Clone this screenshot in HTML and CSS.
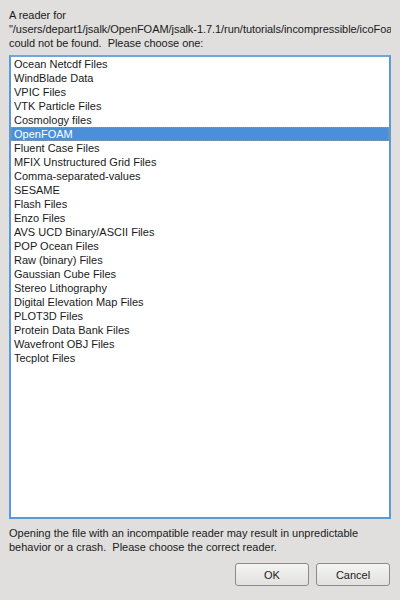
FILE: index.html
```html
<!DOCTYPE html>
<html>
<head>
<meta charset="utf-8">
<link rel="stylesheet" href="styles.css">
</head>
<body>
<div class="dialog">
  <div class="header">
    <div class="line">A reader for</div>
    <div class="line">"/users/depart1/jsalk/OpenFOAM/jsalk-1.7.1/run/tutorials/incompressible/icoFoam/cavity/cavity.foam"</div>
    <div class="line">could not be found.&nbsp; Please choose one:</div>
  </div>
  <div class="list">
    <div class="item">Ocean Netcdf Files</div>
    <div class="item">WindBlade Data</div>
    <div class="item">VPIC Files</div>
    <div class="item">VTK Particle Files</div>
    <div class="item">Cosmology files</div>
    <div class="item selected">OpenFOAM</div>
    <div class="item">Fluent Case Files</div>
    <div class="item">MFIX Unstructured Grid Files</div>
    <div class="item">Comma-separated-values</div>
    <div class="item">SESAME</div>
    <div class="item">Flash Files</div>
    <div class="item">Enzo Files</div>
    <div class="item">AVS UCD Binary/ASCII Files</div>
    <div class="item">POP Ocean Files</div>
    <div class="item">Raw (binary) Files</div>
    <div class="item">Gaussian Cube Files</div>
    <div class="item">Stereo Lithography</div>
    <div class="item">Digital Elevation Map Files</div>
    <div class="item">PLOT3D Files</div>
    <div class="item">Protein Data Bank Files</div>
    <div class="item">Wavefront OBJ Files</div>
    <div class="item">Tecplot Files</div>
  </div>
  <div class="footer">
    <div class="line">Opening the file with an incompatible reader may result in unpredictable</div>
    <div class="line">behavior or a crash.&nbsp; Please choose the correct reader.</div>
  </div>
  <div class="buttons">
    <button class="btn">OK</button>
    <button class="btn">Cancel</button>
  </div>
</div>
</body>
</html>
```

FILE: styles.css
```css
html, body {
  margin: 0;
  padding: 0;
  background: #e0dfde;
}
body {
  width: 400px;
  height: 600px;
  overflow: hidden;
  font-family: "Liberation Sans", Arial, sans-serif;
  font-size: 11px;
  color: #1a1a1a;
}
.dialog {
  height: 600px;
  box-sizing: border-box;
  padding: 8px 9px 14px 9px;
  display: flex;
  flex-direction: column;
}
.header {
  overflow: hidden;
  white-space: nowrap;
  letter-spacing: -0.05px;
}
.line {
  height: 14px;
  line-height: 14px;
  white-space: nowrap;
}
.list {
  margin-top: 5px;
  flex: 1;
  background: #fff;
  border: 2px solid #5b9ad9;
  border-top-color: #6ea6de;
  display: flex;
  flex-direction: column;
}
.item {
  height: 14px;
  line-height: 14px;
  padding-left: 3px;
  white-space: nowrap;
}
.item.selected {
  background: #4a8fd8;
  color: #fff;
  outline: 1px dotted rgba(226, 154, 60, 0.55);
  outline-offset: -1px;
}
.footer {
  margin-top: 7px;
}
.buttons {
  margin-top: 9px;
  display: flex;
  justify-content: flex-end;
  gap: 7px;
  padding-right: 1px;
}
.btn {
  width: 74px;
  height: 23px;
  font-family: "Liberation Sans", Arial, sans-serif;
  font-size: 11px;
  color: #1a1a1a;
  border: 1px solid #8c8b8a;
  border-radius: 3px;
  background: linear-gradient(#f4f4f3, #e2e1df);
  padding: 0;
}
```
